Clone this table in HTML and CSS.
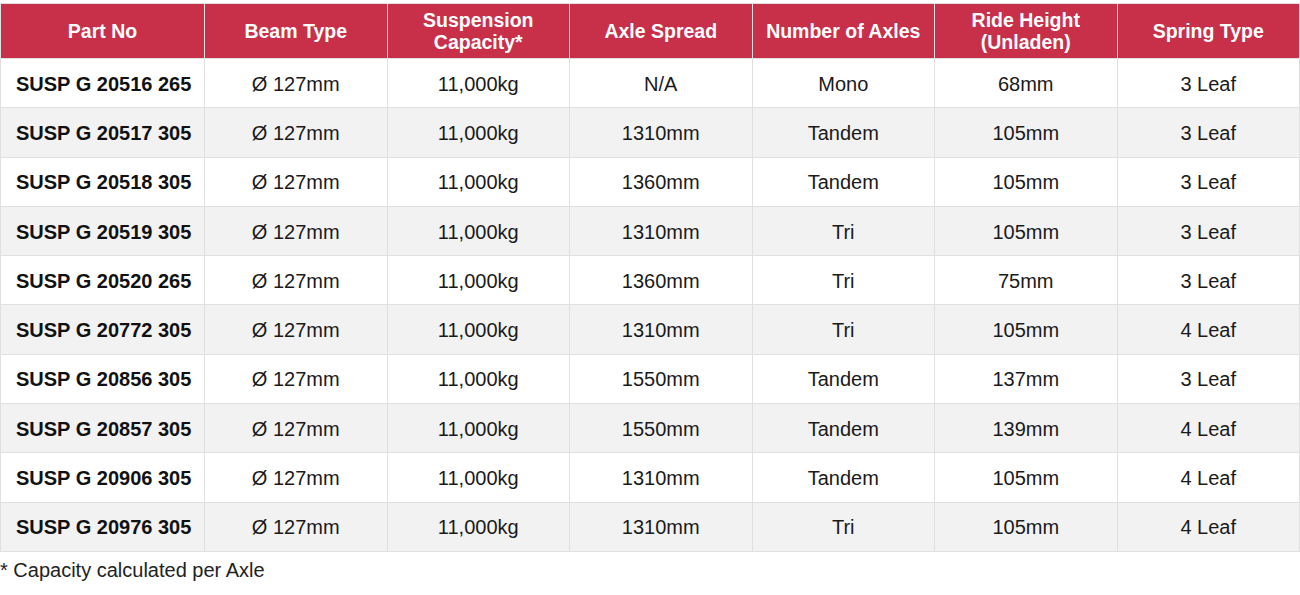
FILE: index.html
```html
<!DOCTYPE html>
<html>
<head>
<meta charset="utf-8">
<link rel="stylesheet" href="styles.css">
</head>
<body>
<table class="spec">
  <colgroup>
    <col class="c-part"><col class="c"><col class="c"><col class="c"><col class="c"><col class="c"><col class="c">
  </colgroup>
  <thead>
    <tr>
      <th>Part No</th>
      <th>Beam Type</th>
      <th>Suspension<br>Capacity*</th>
      <th>Axle Spread</th>
      <th>Number of Axles</th>
      <th>Ride Height<br>(Unladen)</th>
      <th>Spring Type</th>
    </tr>
  </thead>
  <tbody>
    <tr><td class="part">SUSP G 20516 265</td><td>Ø 127mm</td><td>11,000kg</td><td>N/A</td><td>Mono</td><td>68mm</td><td>3 Leaf</td></tr>
    <tr><td class="part">SUSP G 20517 305</td><td>Ø 127mm</td><td>11,000kg</td><td>1310mm</td><td>Tandem</td><td>105mm</td><td>3 Leaf</td></tr>
    <tr><td class="part">SUSP G 20518 305</td><td>Ø 127mm</td><td>11,000kg</td><td>1360mm</td><td>Tandem</td><td>105mm</td><td>3 Leaf</td></tr>
    <tr><td class="part">SUSP G 20519 305</td><td>Ø 127mm</td><td>11,000kg</td><td>1310mm</td><td>Tri</td><td>105mm</td><td>3 Leaf</td></tr>
    <tr><td class="part">SUSP G 20520 265</td><td>Ø 127mm</td><td>11,000kg</td><td>1360mm</td><td>Tri</td><td>75mm</td><td>3 Leaf</td></tr>
    <tr><td class="part">SUSP G 20772 305</td><td>Ø 127mm</td><td>11,000kg</td><td>1310mm</td><td>Tri</td><td>105mm</td><td>4 Leaf</td></tr>
    <tr><td class="part">SUSP G 20856 305</td><td>Ø 127mm</td><td>11,000kg</td><td>1550mm</td><td>Tandem</td><td>137mm</td><td>3 Leaf</td></tr>
    <tr><td class="part">SUSP G 20857 305</td><td>Ø 127mm</td><td>11,000kg</td><td>1550mm</td><td>Tandem</td><td>139mm</td><td>4 Leaf</td></tr>
    <tr><td class="part">SUSP G 20906 305</td><td>Ø 127mm</td><td>11,000kg</td><td>1310mm</td><td>Tandem</td><td>105mm</td><td>4 Leaf</td></tr>
    <tr><td class="part">SUSP G 20976 305</td><td>Ø 127mm</td><td>11,000kg</td><td>1310mm</td><td>Tri</td><td>105mm</td><td>4 Leaf</td></tr>
  </tbody>
</table>
<p class="note">* Capacity calculated per Axle</p>
</body>
</html>
```
FILE: styles.css
```css
html, body {
  margin: 0;
  padding: 0;
  background: #ffffff;
}
body {
  padding-top: 3px;
  font-family: "Liberation Sans", Arial, sans-serif;
  color: #1a1a1a;
}
.spec {
  width: 1300px;
  border-collapse: collapse;
  table-layout: fixed;
}
.c-part { width: 204px; }
.spec th, .spec td {
  border: 1px solid #e0e0e0;
  text-align: center;
  vertical-align: middle;
  padding: 0 4px;
}
.spec th {
  background: #c8304a;
  color: #ffffff;
  font-weight: bold;
  font-size: 19.5px;
  line-height: 22px;
  height: 55px;
  box-sizing: border-box;
}
.spec td {
  font-size: 20px;
  height: 49.3px;
  box-sizing: border-box;
  padding-top: 2px;
}
.spec tbody tr:nth-child(even) td {
  background: #f2f2f2;
}
.spec td.part {
  text-align: left;
  padding-left: 15px;
  font-weight: bold;
  font-size: 20px;
  color: #111;
}
.note {
  margin: 7px 0 0 0;
  font-size: 20px;
  color: #222;
}
```
